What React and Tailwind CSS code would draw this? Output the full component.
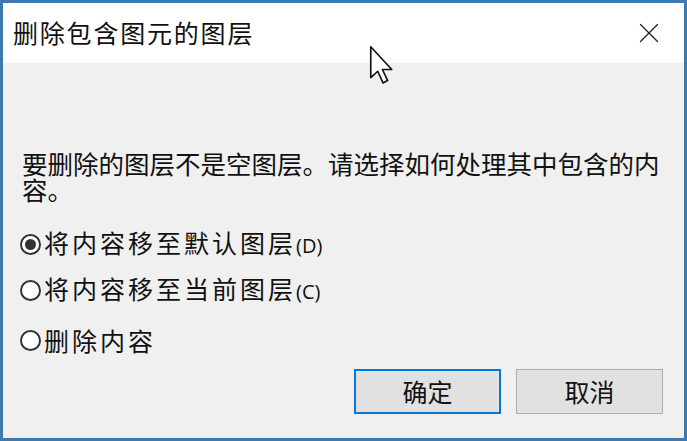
import { X } from "lucide-react";

const font = { fontFamily: "'Noto Sans CJK SC', 'Noto Sans', sans-serif" };
const latin = { fontFamily: "'Open Sans', sans-serif" };

const Radio = ({ checked, children, className = "" }) => (
  <div className={`flex items-center h-[30px] pl-[17px] ${className}`}>
    <span className="w-[21px] h-[21px] rounded-full border-2 border-[#333] bg-white flex items-center justify-center shrink-0">
      {checked && <span className="w-[11px] h-[11px] rounded-full bg-[#333]" />}
    </span>
    <span className="ml-[3px] text-[25px] leading-[30px] text-[#111] tracking-[3px]">
      {children}
    </span>
  </div>
);

const Cursor = () => (
  <svg
    className="absolute left-[366px] top-[41px]"
    width="28"
    height="44"
    viewBox="0 0 24 36"
  >
    <path
      d="M1.5 1.5 L1.5 28 L7.5 22.5 L12 32.5 L16 30.5 L11.5 21 L19.5 21 Z"
      fill="#fff"
      stroke="#111"
      strokeWidth="1.4"
      strokeLinejoin="round"
    />
  </svg>
);

export default function App() {
  return (
    <div
      className="relative w-[687px] h-[441px] border-[3px] border-[#3d79ad] bg-[#f0f0f0] flex flex-col"
      style={font}
    >
      <div className="h-[60px] bg-white flex items-center justify-between pl-[10px] pr-[18px] shrink-0">
        <span className="text-[25px] text-[#111] tracking-[1.8px]">删除包含图元的图层</span>
        <X className="w-[34px] h-[34px] text-[#222]" strokeWidth={0.9} />
      </div>

      <div className="flex flex-col pt-[87px]">
        <p className="pl-[19px] w-[672px] text-[25.5px] leading-[26px] text-[#111]">
          要删除的图层不是空图层。请选择如何处理其中包含的内容。
        </p>

        <Radio checked className="mt-[27px]">
          将内容移至默认图层<span className="text-[20px] tracking-normal" style={latin}>(D)</span>
        </Radio>
        <Radio className="mt-[16px]">
          将内容移至当前图层<span className="text-[20px] tracking-normal" style={latin}>(C)</span>
        </Radio>
        <Radio className="mt-[20px]">删除内容</Radio>

        <div className="flex justify-end gap-[15px] pr-[21px] mt-[14px]">
          <button className="w-[147px] h-[45px] border-2 border-[#0078d7] bg-[#e1e1e1] text-[25px] text-[#111]">
            确定
          </button>
          <button className="w-[147px] h-[45px] border border-[#adadad] bg-[#e1e1e1] text-[25px] text-[#111]">
            取消
          </button>
        </div>
      </div>

      <Cursor />
    </div>
  );
}
